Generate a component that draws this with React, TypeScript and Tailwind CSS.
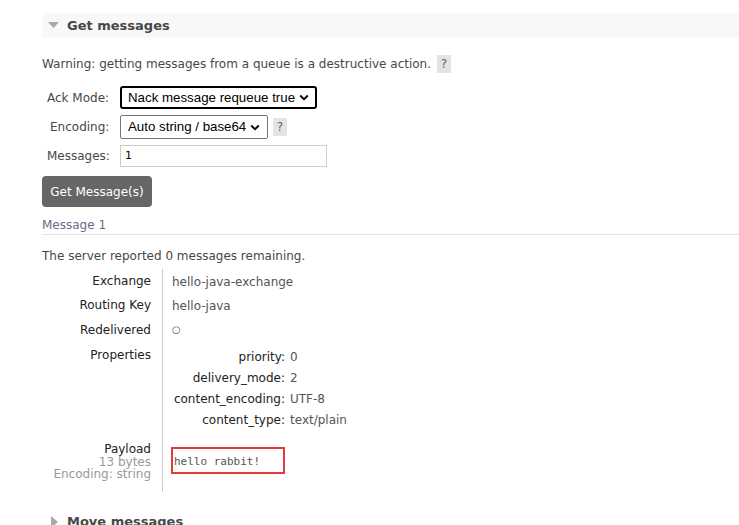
import React from "react";

const body = { fontFamily: '"DejaVu Sans", Verdana, sans-serif' };

function Chevron() {
  return (
    <svg width="10" height="7" viewBox="0 0 10 7" className="ml-auto">
      <path d="M1.2 1.5 L5 5.2 L8.8 1.5" fill="none" stroke="#000" strokeWidth="1.8" />
    </svg>
  );
}

function Help() {
  return (
    <span className="inline-flex h-[18px] w-[14px] items-center justify-center bg-[#e4e4e4] text-[12px] text-[#666]">?</span>
  );
}

export default function App() {
  return (
    <div className="h-[525px] w-[739px] overflow-hidden bg-white text-[12px] text-[#484848]" style={body}>
      <div className="pl-[42px] pt-[13px]">
        <div className="flex h-[25px] items-center bg-[#f8f8f8]">
          <svg width="12" height="8" viewBox="0 0 12 8" className="ml-[6px]">
            <path d="M0 0 L11 0 L5.5 6 Z" fill="#aaa" />
          </svg>
          <span className="ml-[7px] text-[13px] font-bold text-[#484848]">Get messages</span>
        </div>

        <div className="mt-[17px] flex items-center gap-[6px]">
          <span>Warning: getting messages from a queue is a destructive action.</span>
          <Help />
        </div>

        <div className="mt-[13px] grid grid-cols-[78px_auto] items-center gap-y-[6px]">
          <span className="pl-[5px]">Ack Mode:</span>
          <div className="flex h-[23px] w-[197px] items-center rounded-[3px] border-2 border-black px-[6px] text-[13.3px] text-black" style={{ fontFamily: '"Liberation Sans", Arial, sans-serif' }}>
            <span>Nack message requeue true</span>
            <Chevron />
          </div>
          <span className="pl-[8px]">Encoding:</span>
          <div className="flex items-center gap-[5px]">
            <div className="flex h-[24px] w-[148px] items-center rounded-[2px] border border-[#767676] px-[7px] text-[13.3px] text-black" style={{ fontFamily: '"Liberation Sans", Arial, sans-serif' }}>
              <span>Auto string / base64</span>
              <Chevron />
            </div>
            <Help />
          </div>
          <span className="pl-[5px]">Messages:</span>
          <div className="flex h-[22px] w-[207px] items-center border border-[#ccc] px-[4px] text-[11px] text-black">1</div>
        </div>

        <button className="mt-[9px] h-[31px] w-[110px] rounded-[4px] bg-[#666] text-[12px] text-white" style={body}>Get Message(s)</button>

        <div className="mt-[9px] border-b border-[#e4e4e4] pb-0 text-[#6a6a8a]">Message 1</div>

        <div className="mt-[12px]">The server reported 0 messages remaining.</div>

        <div className="mt-[4px] grid grid-cols-[120px_auto]">
          <div className="flex flex-col items-end pr-[11px] pt-[3px] text-[#222]">
            <div className="h-[24px]">Exchange</div>
            <div className="h-[25px]">Routing Key</div>
            <div className="h-[25px]">Redelivered</div>
            <div className="h-[86px]">Properties</div>
            <div className="mt-[8px]">Payload</div>
            <div className="-mt-[2px] leading-[12px] text-[#999]">13 bytes</div>
            <div className="leading-[12px] text-[#999]">Encoding: string</div>
            <div className="h-[12px]"></div>
          </div>
          <div className="border-l border-[#ccc] pl-[9px] pt-[4px] text-[#555]">
            <div className="h-[24px]">hello-java-exchange</div>
            <div className="h-[25px]">hello-java</div>
            <div className="h-[25px] text-[10px]">○</div>
            <div className="grid grid-cols-[113px_auto] gap-y-[3px] pt-[1px]">
              <span className="text-right text-[#222]">priority:</span><span className="pl-[5px]">0</span>
              <span className="text-right text-[#222]">delivery_mode:</span><span className="pl-[5px]">2</span>
              <span className="text-right text-[#222]">content_encoding:</span><span className="pl-[5px]">UTF-8</span>
              <span className="text-right text-[#222]">content_type:</span><span className="pl-[5px]">text/plain</span>
            </div>
            <div className="-ml-[1px] mt-[18px] flex h-[27px] w-[114px] items-end border-2 border-[#e53935] pb-[2px] pl-[1px] text-[11px] text-[#555]" style={{ fontFamily: '"DejaVu Sans Mono", monospace' }}>
              hello rabbit!
            </div>
          </div>
        </div>

        <div className="mt-[20px] flex items-center">
          <svg width="8" height="12" viewBox="0 0 8 12" className="ml-[9px]">
            <path d="M0 0 L7 6 L0 12 Z" fill="#aaa" />
          </svg>
          <span className="ml-[8px] text-[13px] font-bold">Move messages</span>
        </div>
      </div>
    </div>
  );
}
